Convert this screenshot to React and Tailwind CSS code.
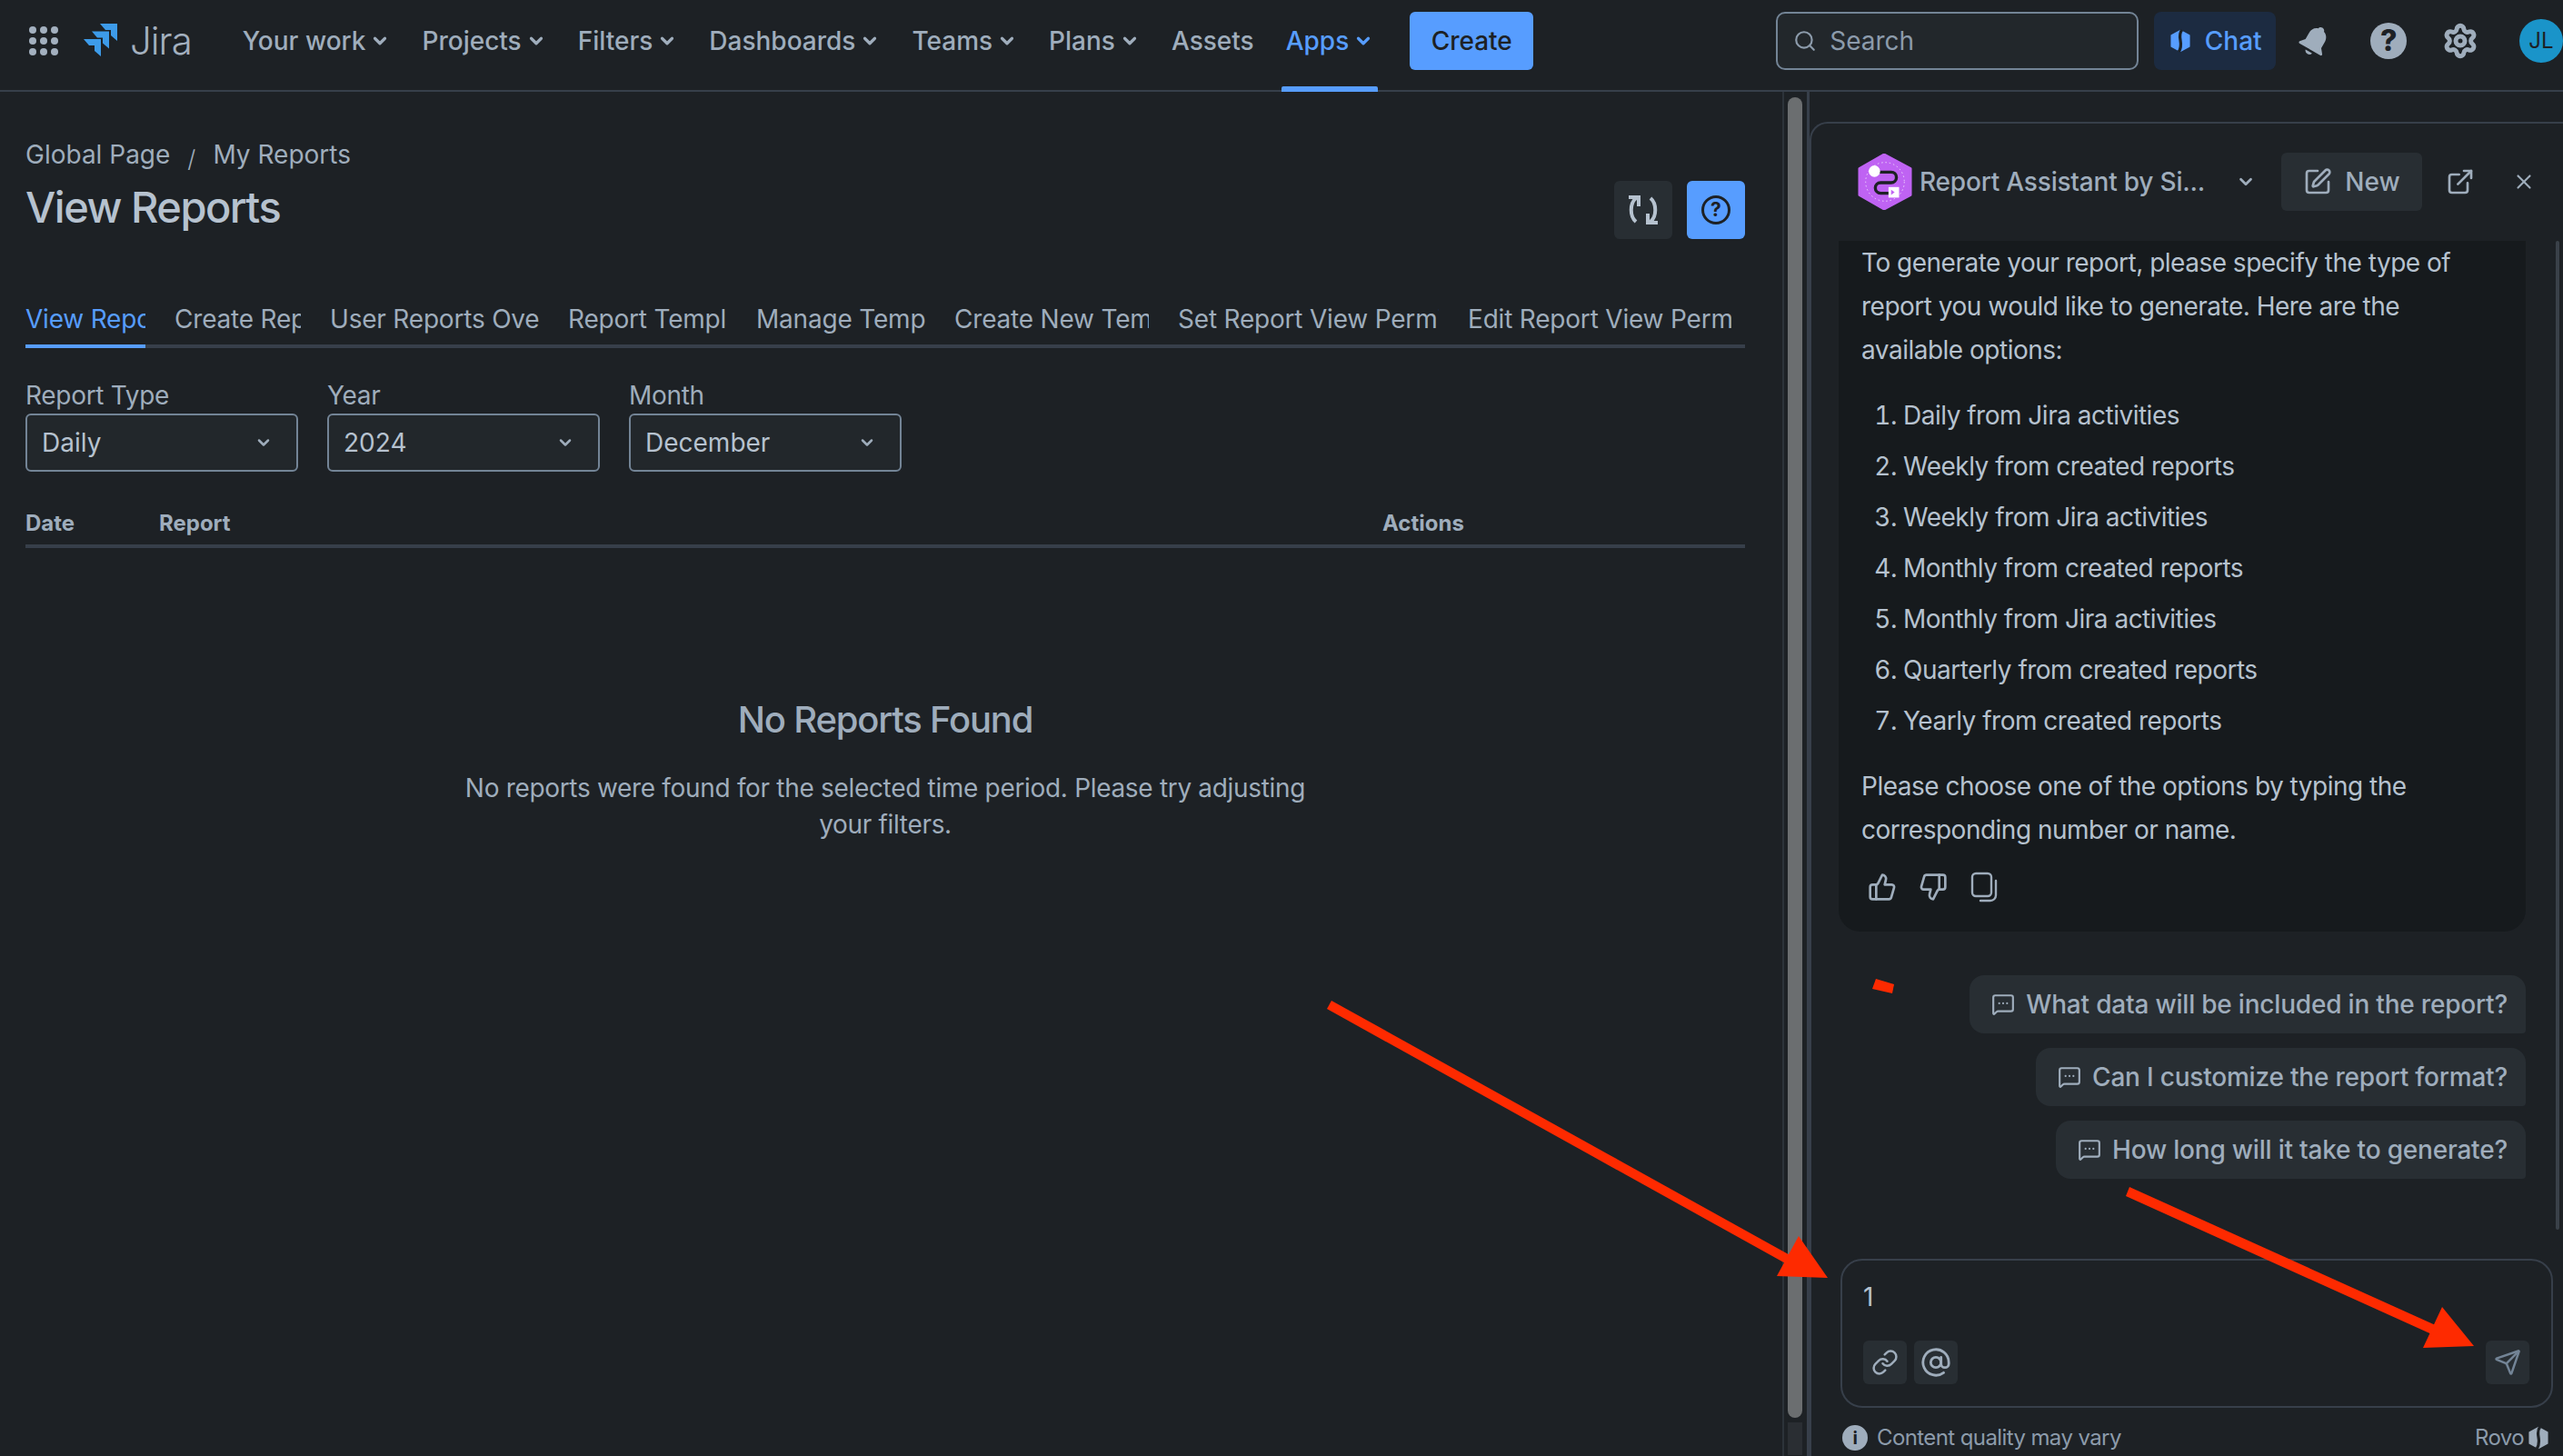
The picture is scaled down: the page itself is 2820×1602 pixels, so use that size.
import React from 'react';
import {
  AtSign, ChevronDown, ExternalLink, Link, MessageSquareMore, Search, Send, Settings, SquarePen, ThumbsDown, ThumbsUp, X,
} from 'lucide-react';

const navItems = [
  { label: 'Your work', menu: true },
  { label: 'Projects', menu: true },
  { label: 'Filters', menu: true },
  { label: 'Dashboards', menu: true },
  { label: 'Teams', menu: true },
  { label: 'Plans', menu: true },
  { label: 'Assets', menu: false },
];

const tabs = [
  { label: 'View Reports', width: 'w-[132px]', active: true },
  { label: 'Create Report', width: 'w-[139px]' },
  { label: 'User Reports Overview', width: 'w-[230px]' },
  { label: 'Report Templates', width: 'w-[175px]' },
  { label: 'Manage Templates', width: 'w-[186px]' },
  { label: 'Create New Template', width: 'w-[214px]' },
  { label: 'Set Report View Permissions', width: 'w-[287px]' },
  { label: 'Edit Report View Permissions', width: 'w-[290px]' },
];

const filters = [
  { label: 'Report Type', value: 'Daily' },
  { label: 'Year', value: '2024' },
  { label: 'Month', value: 'December' },
];

const options = [
  'Daily from Jira activities',
  'Weekly from created reports',
  'Weekly from Jira activities',
  'Monthly from created reports',
  'Monthly from Jira activities',
  'Quarterly from created reports',
  'Yearly from created reports',
];

const prompts = [
  'What data will be included in the report?',
  'Can I customize the report format?',
  'How long will it take to generate?',
];

const JiraLogo = () => (
  <svg width="40" height="40" viewBox="0 0 40 40" fill="#3d9be9">
    <path d="M20 1H39V20L32 14V8H26Z" />
    <path d="M11 9.5H30V28.5L23 22.5V16.5H17Z" />
    <path d="M2 18H21V37L14 31V25H8Z" />
  </svg>
);

const AppGrid = () => (
  <svg width="32" height="32" viewBox="0 0 32 32" fill="#a3b0bf">
    {[4, 16, 28].map((y) =>
      [4, 16, 28].map((x) => <circle key={`${x}-${y}`} cx={x} cy={y} r="4" />)
    )}
  </svg>
);

const RovoMark = ({ size, color }) => (
  <svg width={size} height={size} viewBox="0 0 24 24">
    <path d="M12 1.5L21 6.5V17.5L12 22.5L3 17.5V6.5Z" fill={color} stroke={color} strokeWidth="1.5" strokeLinejoin="round" />
    <path d="M13.5 1C8 8 16 14 10.5 23" fill="none" stroke="#1d2125" strokeWidth="3" />
  </svg>
);

const BellIcon = () => (
  <svg width="40" height="44" viewBox="0 0 24 24" fill="#9fadbc" className="rotate-[30deg]">
    <path d="M12 2c-1.2 0-2 .8-2.2 1.8C7.3 4.6 6 6.800 6 9.500V14l-2.600 3.200c-.4.500 0 1.300.6 1.300h16c.6 0 1-.8.6-1.300L18 14V9.500c0-2.700-1.300-4.900-3.800-5.700C14 2.800 13.200 2 12 2z" />
    <path d="M9.500 20a2.600 2.600 0 0 0 5 0z" />
  </svg>
);

const RefreshIcon = () => (
  <svg width="36" height="36" viewBox="0 0 36 36" fill="none" stroke="#b6c2cf" strokeWidth="4">
    <path d="M10 5C3 11 3 25 10 31" />
    <path d="M2 4H13V14" />
    <path d="M26 31C33 25 33 11 26 5" />
    <path d="M34 32H23V22" />
  </svg>
);

const CopyIcon = () => (
  <svg width="32" height="34" viewBox="0 0 32 34" fill="none" stroke="#9fadbc" strokeWidth="2.400" strokeLinecap="round">
    <rect x="3" y="2" width="21" height="25" rx="4" />
    <path d="M29 10V26a6 6 0 0 1-6 6H12" />
  </svg>
);

const AssistantLogo = () => (
  <svg width="60" height="62" viewBox="8 8 62 64">
    <path d="M38 9L68 25V55L38 71L10 55V25Z" fill="#bf63f3" stroke="#bf63f3" strokeWidth="3" strokeLinejoin="round" />
    <circle cx="39" cy="40" r="22" fill="none" stroke="#eedbfb" strokeWidth="1" strokeDasharray="1.500 3" />
    <path d="M32 29H46a6 6 0 0 1 0 12H34a6 6 0 0 0 0 12H44" fill="none" stroke="#1d2125" strokeWidth="3.500" />
    <circle cx="27" cy="28" r="6.500" fill="#ffffff" />
    <rect x="43" y="46" width="12" height="12" fill="#ffffff" />
    <path d="M46 49l4 3-4 3z" fill="#bf63f3" />
  </svg>
);

const NavItem = ({ label, menu, active }) => (
  <div className={`flex items-center gap-[5px] whitespace-nowrap ${active ? 'text-[#579dff]' : 'text-[#9fadbc]'}`}>
    <span>{label}</span>
    {menu && <ChevronDown size={22} strokeWidth={3.500} />}
  </div>
);

const Header = () => (
  <header className="flex h-[101px] shrink-0 items-center border-b-2 border-[#373f4a] pb-[9px] pl-[32px] text-[28px] font-medium">
    <AppGrid />
    <div className="ml-[26px] flex items-center gap-[13px]">
      <JiraLogo />
      <span className="text-[42px] leading-none font-light tracking-[-1px] text-[#a3b0bf]">Jira</span>
    </div>
    <nav className="ml-[56px] flex h-full items-center gap-[35px]">
      {navItems.map((item) => (
        <NavItem key={item.label} {...item} />
      ))}
      <div className="relative flex h-full items-center">
        <NavItem label="Apps" menu active />
        <div className="absolute right-[-5px] bottom-[-11px] left-[-5px] h-[6px] rounded-t-[2px] bg-[#579dff]"></div>
      </div>
    </nav>
    <button className="ml-[40px] h-[64px] w-[136px] rounded-[6px] bg-[#579dff] text-[#1d2125]">Create</button>
    <div className="ml-[267px] flex h-[64px] w-[399px] items-center gap-[14px] rounded-[10px] border-2 border-[#738496] bg-[#22272b] pl-[17px] font-normal text-[#8c9bab]">
      <Search size={26} strokeWidth={2} />
      <span>Search</span>
    </div>
    <div className="ml-[17px] flex h-[64px] w-[134px] items-center justify-center gap-[14px] rounded-[8px] bg-[#1c2b41] text-[#579dff]">
      <RovoMark size={26} color="#579dff" />
      <span>Chat</span>
    </div>
    <div className="ml-[23px] flex w-[40px] justify-center">
      <BellIcon />
    </div>
    <div className="ml-[41px] flex size-[40px] items-center justify-center rounded-full bg-[#9fadbc] text-[32px] leading-none font-extrabold text-[#1d2125]">?</div>
    <div className="ml-[39px] text-[#9fadbc]">
      <Settings size={40} strokeWidth={3} />
    </div>
    <div className="ml-auto flex size-[48px] shrink-0 items-center justify-center rounded-full bg-[#1a94c9] text-[24px] font-normal text-[#1d2125]">JL</div>
  </header>
);

const ReportsPanel = () => (
  <main className="w-[1961px] shrink-0 pt-[50px] pr-[41px] pl-[28px] text-[#9fadbc]">
    <div className="flex h-[38px] items-center text-[28px]">
      <span>Global Page</span>
      <span className="mx-[19px] translate-y-[4px] text-[26px] font-light">/</span>
      <span>My Reports</span>
    </div>
    <div className="mt-[7px] flex items-start justify-between">
      <h1 className="text-[47px] leading-[64px] font-medium tracking-[-1.500px] text-[#b6c2cf]">View Reports</h1>
      <div className="flex gap-[16px] pt-[3px]">
        <button className="flex size-[64px] items-center justify-center rounded-[6px] bg-[#282e33]">
          <RefreshIcon />
        </button>
        <button className="flex size-[64px] items-center justify-center rounded-[6px] bg-[#579dff]">
          <span className="flex size-[32px] items-center justify-center rounded-full border-[3px] border-[#1d2125] text-[21px] font-bold text-[#1d2125]">?</span>
        </button>
      </div>
    </div>

    <div className="mt-[60px] flex h-[60px] items-stretch gap-[32px] border-b-4 border-[#373f4a] text-[28px] tracking-[-0.2px]">
      {tabs.map((tab) => (
        <div
          key={tab.label}
          className={`relative flex items-center ${tab.width} shrink-0 ${tab.active ? 'text-[#579dff]' : 'text-[#9fadbc]'}`}
        >
          <span className="overflow-hidden whitespace-nowrap">{tab.label}</span>
          {tab.active && <div className="absolute right-0 bottom-[-4px] left-0 h-[4px] bg-[#579dff]"></div>}
        </div>
      ))}
    </div>

    <div className="mt-[34px] flex gap-[32px]">
      {filters.map((filter) => (
        <div key={filter.label} className="w-[300px]">
          <div className="h-[38px] text-[28px] leading-[36px] tracking-[-0.3px]">{filter.label}</div>
          <div className="flex h-[64px] items-center justify-between rounded-[6px] border-2 border-[#738496] bg-[#22272b] pr-[26px] pl-[16px] text-[28px] text-[#b6c2cf]">
            <span>{filter.value}</span>
            <ChevronDown size={20} strokeWidth={3} className="text-[#9fadbc]" />
          </div>
        </div>
      ))}
    </div>

    <div className="mt-[40px] flex h-[44px] items-start border-b-4 border-[#373f4a] text-[24px] leading-[33px] font-bold">
      <span className="w-[147px]">Date</span>
      <span className="w-[1346px]">Report</span>
      <span>Actions</span>
    </div>

    <div className="mx-auto mt-[164px] w-[960px] text-center">
      <h2 className="text-[40px] leading-[50px] font-medium tracking-[-1.200px]">No Reports Found</h2>
      <p className="mt-[30px] text-[28px] leading-[40px] tracking-[-0.32px]">
        No reports were found for the selected time period. Please try adjusting your filters.
      </p>
    </div>
  </main>
);

const ScrollColumn = () => (
  <div className="flex w-[30px] shrink-0 flex-col items-center border-r-[3px] border-l-2 border-r-[#373f4a] border-l-[#2c333a] pt-[6px] pr-[1px]">
    <div className="h-[1453px] w-[16px] rounded-full bg-[#6b6e70]"></div>
    <div className="mt-[5px] h-[36px] w-[16px] bg-[#2a2e33]"></div>
  </div>
);

const AssistantPanel = () => (
  <aside className="mt-[33px] flex min-w-0 flex-1 flex-col rounded-tl-[20px] border-t-2 border-l-2 border-[#373f4a] text-[28px] text-[#9fadbc]">
    <div className="flex h-[129px] shrink-0 items-center pb-[2px] pl-[51px]">
      <AssistantLogo />
      <span className="ml-[8px] w-[313px] font-medium tracking-[-0.2px] whitespace-nowrap">Report Assistant by Si...</span>
      <ChevronDown size={22} strokeWidth={3} className="ml-[35px]" />
      <button className="ml-[28px] flex h-[64px] w-[155px] items-center justify-center gap-[14px] rounded-[6px] bg-[#282e33] font-medium">
        <SquarePen size={32} strokeWidth={2} />
        <span>New</span>
      </button>
      <ExternalLink size={32} strokeWidth={2} className="ml-[26px]" />
      <X size={26} strokeWidth={2} className="ml-[41px]" />
    </div>

    <div className="flex h-[1120px] shrink-0">
      <div className="ml-[30px] w-[756px] shrink-0">
        <div className="h-[760px] rounded-b-[24px] bg-[#161a1d] px-[25px] leading-[47px] tracking-[-0.5px] text-[#b6c2cf]">
          <p className="leading-[48px]">To generate your report, please specify the type of report you would like to generate. Here are the available options:</p>
          <ol className="mt-[20px] list-decimal pl-[46px] leading-[56px]">
            {options.map((option) => (
              <li key={option}>{option}</li>
            ))}
          </ol>
          <p className="mt-[20px] leading-[48px]">Please choose one of the options by typing the corresponding number or name.</p>
          <div className="mt-[22px] flex items-center gap-[24px] pl-[7px] text-[#9fadbc]">
            <ThumbsUp size={32} strokeWidth={2} />
            <ThumbsDown size={32} strokeWidth={2} />
            <CopyIcon />
          </div>
        </div>
        <div className="mt-[48px] flex flex-col items-end gap-[16px]">
          {prompts.map((prompt) => (
            <div key={prompt} className="flex h-[64px] items-center gap-[12px] rounded-[16px] rounded-br-[4px] bg-[#282e33] pr-[20px] pl-[24px] font-medium tracking-[-0.2px]">
              <MessageSquareMore size={26} strokeWidth={2} />
              <span>{prompt}</span>
            </div>
          ))}
        </div>
      </div>
      <div className="ml-[33px] h-[1088px] w-[4px] rounded-full bg-[#3a4149]"></div>
    </div>

    <div className="ml-[32px] flex h-[164px] w-[784px] shrink-0 flex-col justify-between rounded-[24px] border-2 border-[#373f4a] pt-[20px] pr-[24px] pb-[24px] pl-[23px] text-[#b6c2cf]">
      <div className="leading-[40px]">1</div>
      <div className="flex items-center gap-[8px] text-[#9fadbc]">
        <button className="flex size-[48px] items-center justify-center rounded-[6px] bg-[#282e33]">
          <Link size={30} strokeWidth={2} />
        </button>
        <button className="flex size-[48px] items-center justify-center rounded-[6px] bg-[#282e33]">
          <AtSign size={34} strokeWidth={2} />
        </button>
        <button className="ml-auto flex size-[48px] items-center justify-center rounded-[6px] bg-[#282e33] text-[#738496]">
          <Send size={30} strokeWidth={2} />
        </button>
      </div>
    </div>

    <div className="mt-[17px] flex items-center pr-[14px] pl-[34px] text-[24px] leading-[32px] tracking-[-0.6px] text-[#8c9bab]">
      <span className="flex size-[28px] items-center justify-center rounded-full bg-[#9fadbc] text-[20px] font-bold text-[#1d2125]">i</span>
      <span className="ml-[10px]">Content quality may vary</span>
      <span className="ml-auto">Rovo</span>
      <span className="ml-[3px]">
        <RovoMark size={26} color="#9fadbc" />
      </span>
    </div>
  </aside>
);

const Annotations = () => (
  <svg className="pointer-events-none absolute inset-0" width="2820" height="1602" viewBox="0 0 2820 1602" fill="#fe2a00">
    <polygon points="1465,1101 1460,1110 1968,1392 1973,1383" />
    <polygon points="1979,1360 1955,1404 2011,1406" />
    <polygon points="2343,1306 2339,1316 2680,1470 2684,1460" />
    <polygon points="2687,1438 2666,1483 2722,1481" />
    <polygon points="2064,1077 2084,1083 2082,1093 2060,1088" />
  </svg>
);

export default function App() {
  return (
    <div className="relative flex h-[1602px] w-[2820px] flex-col overflow-hidden bg-[#1d2125] font-['Inter',sans-serif]">
      <Header />
      <div className="flex min-h-0 flex-1">
        <ReportsPanel />
        <ScrollColumn />
        <AssistantPanel />
      </div>
      <Annotations />
    </div>
  );
}
